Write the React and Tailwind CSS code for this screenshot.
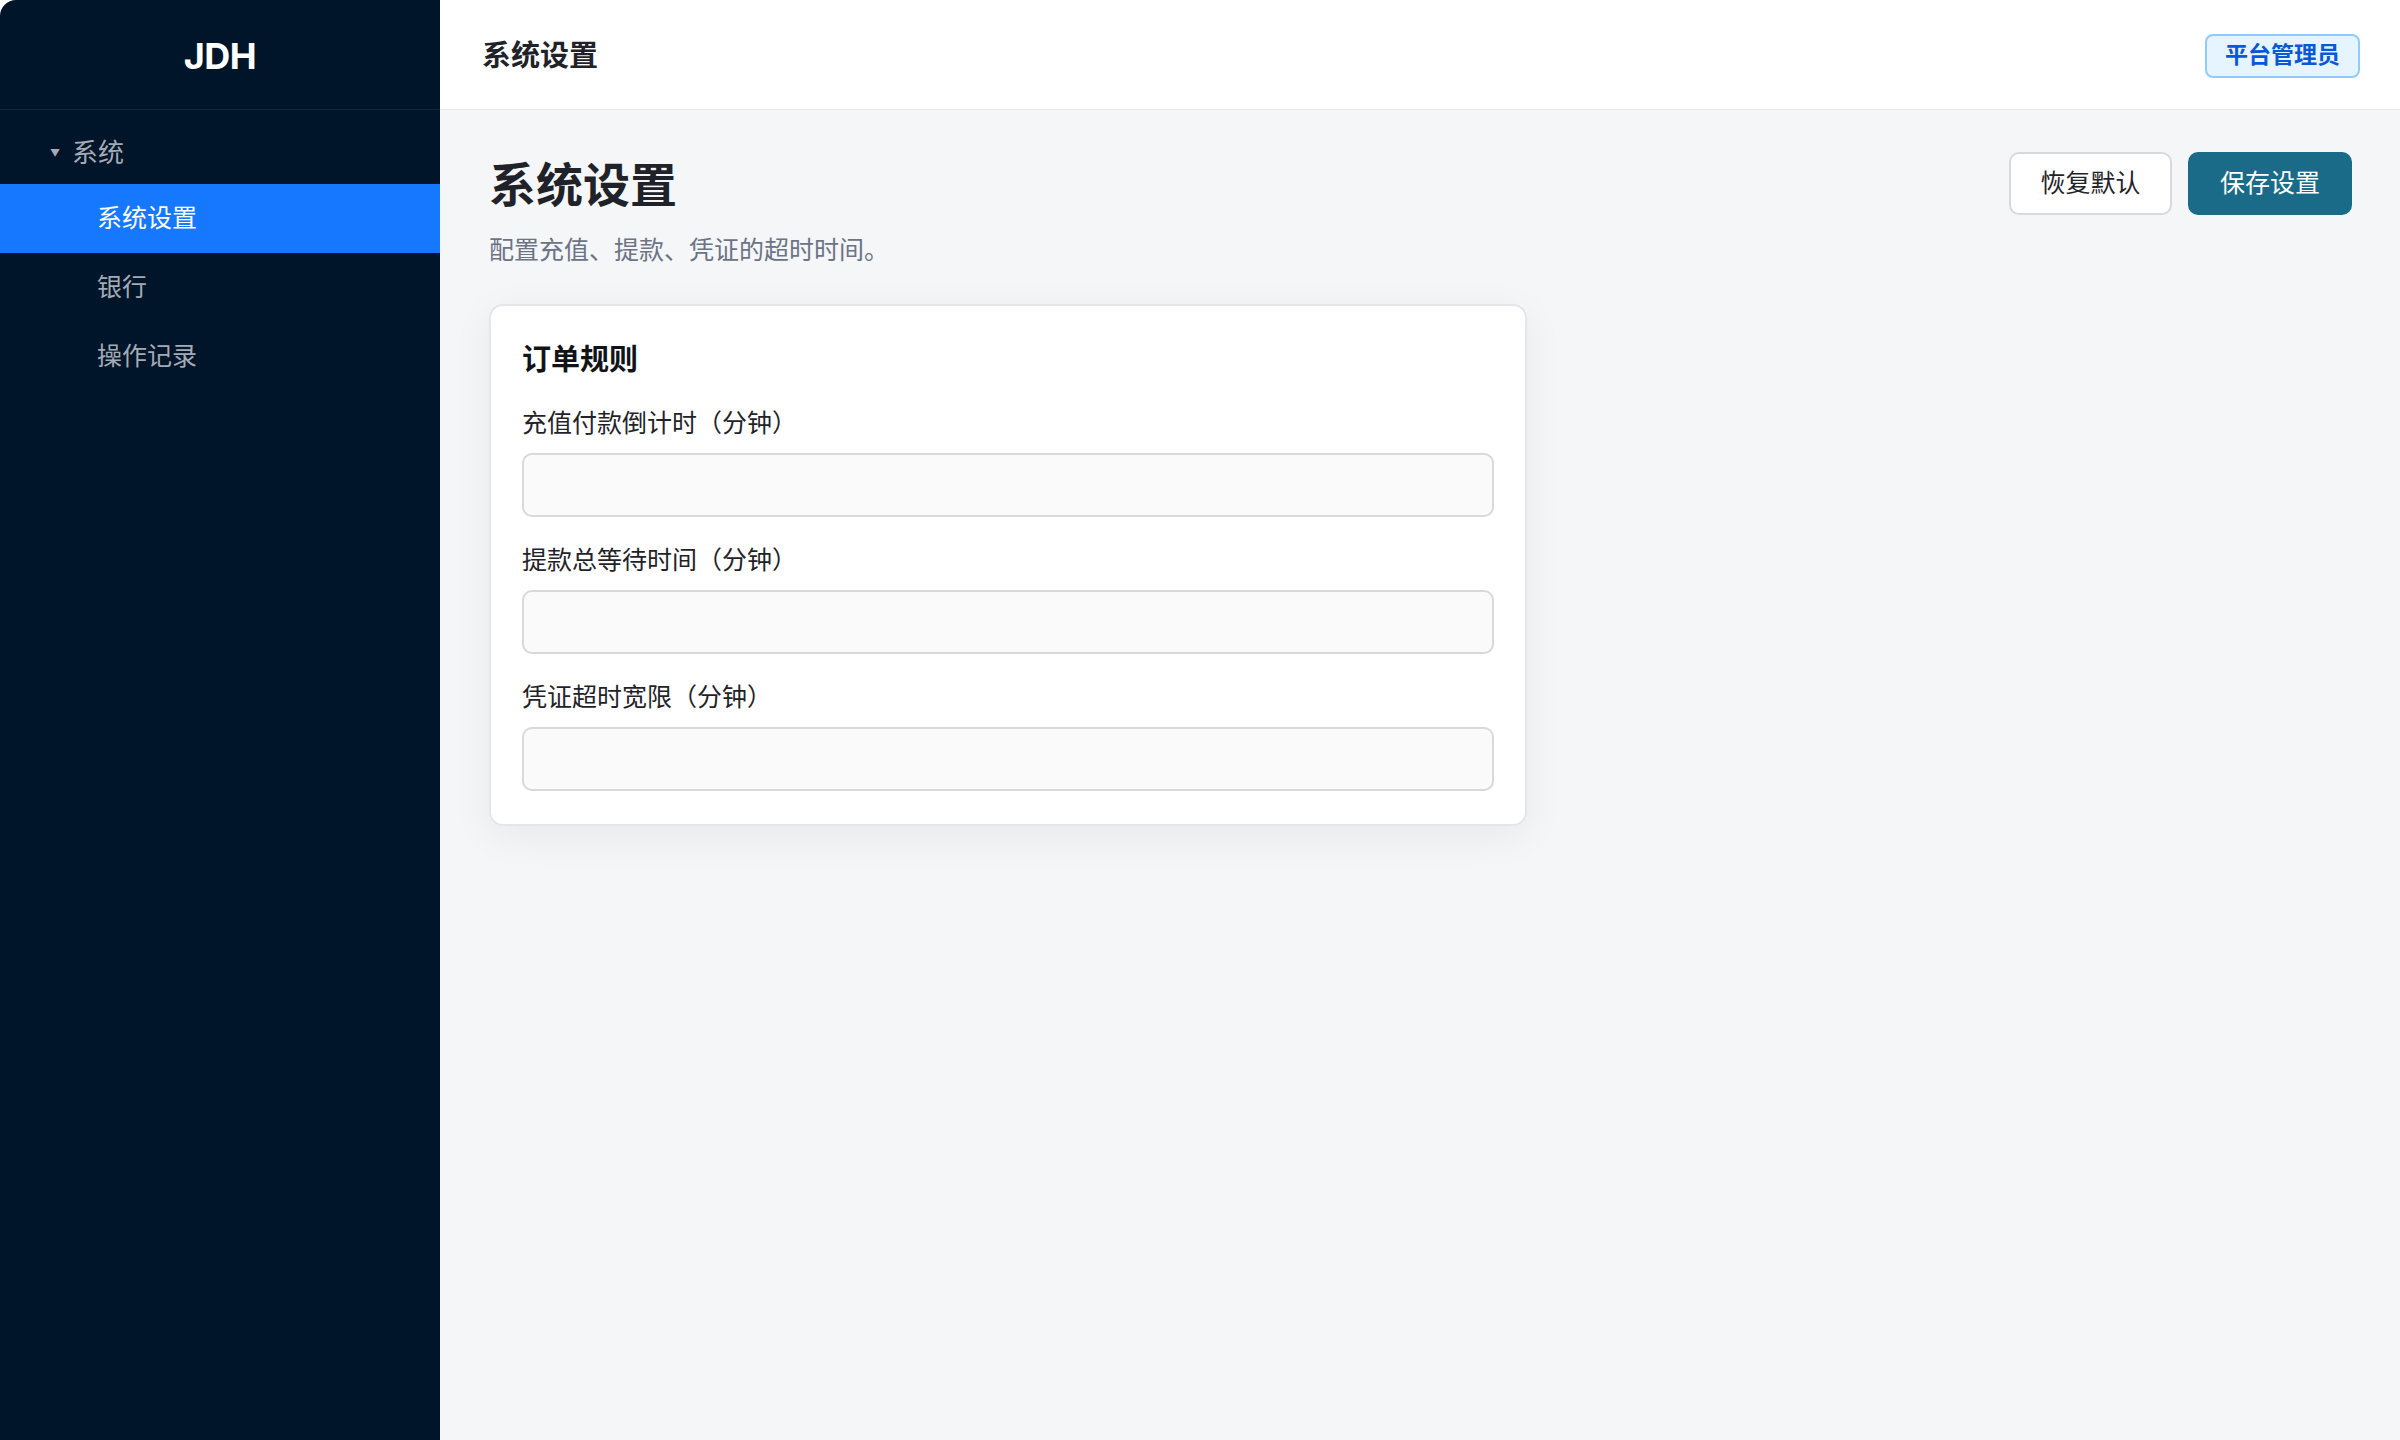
import { useState } from "react";

const navItems = ["系统设置", "银行", "操作记录"];

const fields = [
  { key: "recharge", label: "充值付款倒计时（分钟）" },
  { key: "withdraw", label: "提款总等待时间（分钟）" },
  { key: "voucher", label: "凭证超时宽限（分钟）" },
];

function Sidebar() {
  return (
    <aside className="w-[440px] shrink-0 bg-[#001529] flex flex-col">
      <div className="h-[110px] flex items-center justify-center pt-[3px] border-b border-[#14263a]">
        <span className="text-white font-bold text-[36px] tracking-[-0.5px] font-['Inter','Liberation_Sans',sans-serif]">
          JDH
        </span>
      </div>
      <nav className="pt-[5px]">
        <div className="h-[69px] flex items-center pl-[50px] pt-[6px] text-[#a3abb5] text-[26px] leading-none">
          <span className="text-[10px] mr-[12px]">▼</span>
          <span>系统</span>
        </div>
        {navItems.map((item, i) => (
          <div
            key={item}
            className={
              i === 0
                ? "h-[69px] flex items-center pl-[97px] text-[25px] bg-[#1677ff] text-white"
                : "h-[69px] flex items-center pl-[97px] text-[25px] text-[#a3abb5]"
            }
          >
            {item}
          </div>
        ))}
      </nav>
    </aside>
  );
}

function Header() {
  return (
    <header className="h-[110px] shrink-0 bg-white border-b border-[#e6e8eb] flex items-center justify-between pl-[42px] pr-[40px]">
      <h2 className="text-[29px] pt-[2px] font-bold text-[#1f2329]">系统设置</h2>
      <span className="h-[44px] mt-[2px] px-[18px] flex items-center rounded-[8px] border-2 border-[#91caff] bg-[#e6f4ff] text-[#0958d9] text-[23px] font-semibold">
        平台管理员
      </span>
    </header>
  );
}

function SettingsCard({ values, onChange }) {
  return (
    <div className="w-[1038px] mt-[36px] bg-white border-2 border-[#e4e6ea] rounded-[14px] shadow-[0_10px_40px_rgba(15,23,42,0.06)] px-[31px] pt-[31px] pb-[33px]">
      <h3 className="text-[29px] leading-[42px] font-bold text-[#111318] mt-[2px] mb-[24px]">订单规则</h3>
      <div className="flex flex-col gap-[25px]">
        {fields.map((f) => (
          <div key={f.key}>
            <label className="block text-[25px] leading-[36px] text-[#1f2329] mb-[12px]">{f.label}</label>
            <input
              type="text"
              value={values[f.key]}
              onChange={(e) => onChange(f.key, e.target.value)}
              className="w-full h-[64px] rounded-[10px] border-2 border-[#d9d9d9] bg-[#fafafa] px-[18px] text-[24px] outline-none"
            />
          </div>
        ))}
      </div>
    </div>
  );
}

export default function App() {
  const [values, setValues] = useState({ recharge: "", withdraw: "", voucher: "" });

  const handleChange = (key, v) => setValues((prev) => ({ ...prev, [key]: v }));

  return (
    <div className="w-[2400px] h-[1440px] flex rounded-t-[16px] overflow-hidden font-['Inter','Noto_Sans_CJK_SC',sans-serif]">
      <Sidebar />
      <div className="flex-1 flex flex-col bg-[#f5f6f8]">
        <Header />
        <main className="flex-1 pt-[42px] pl-[49px] pr-[48px]">
          <div className="flex items-start justify-between">
            <div>
              <h1 className="text-[47px] leading-[66px] font-bold text-[#1f2329]">系统设置</h1>
              <p className="mt-[14px] text-[25px] leading-[36px] text-[#6b7385]">配置充值、提款、凭证的超时时间。</p>
            </div>
            <div className="flex gap-[16px]">
              <button className="w-[163px] h-[63px] rounded-[10px] border-2 border-[#d9d9d9] bg-white text-[25px] text-[#1f2329]">
                恢复默认
              </button>
              <button className="w-[164px] h-[63px] rounded-[10px] bg-[#1a6b87] text-[25px] text-white">
                保存设置
              </button>
            </div>
          </div>
          <SettingsCard values={values} onChange={handleChange} />
        </main>
      </div>
    </div>
  );
}
